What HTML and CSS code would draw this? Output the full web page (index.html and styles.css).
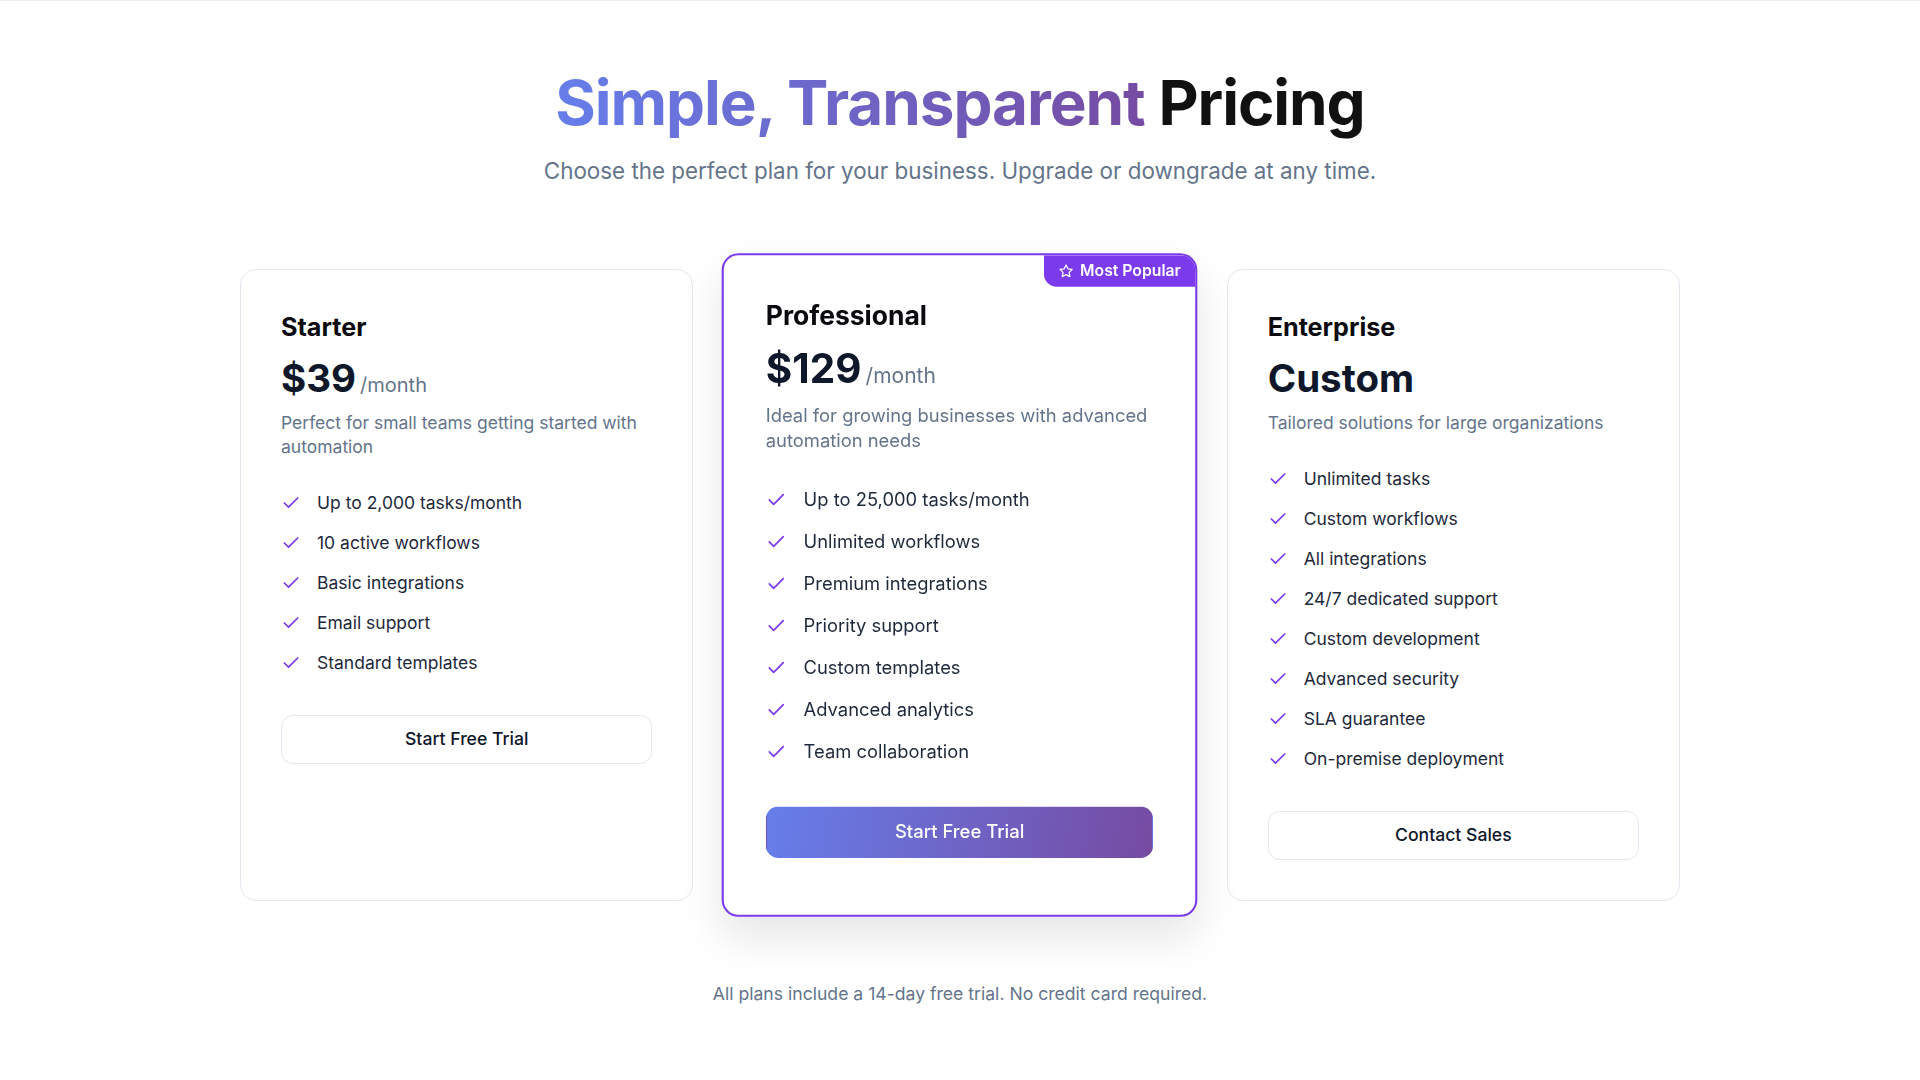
FILE: index.html
```html
<!DOCTYPE html>
<html lang="en">
<head>
<meta charset="utf-8">
<title>Pricing</title>
<link rel="stylesheet" href="styles.css">
</head>
<body>
<main class="page">
  <header class="header">
    <h1 class="title"><span class="grad">Simple, Transparent</span> Pricing</h1>
    <p class="subtitle">Choose the perfect plan for your business. Upgrade or downgrade at any time.</p>
  </header>

  <section class="plans">
    <article class="card">
      <h3 class="plan-name">Starter</h3>
      <div class="price-row"><span class="price">$39</span><span class="period">/month</span></div>
      <p class="desc">Perfect for small teams getting started with automation</p>
      <ul class="features">
        <li><svg class="check" viewBox="0 0 24 24"><path d="M20 6 9 17l-5-5"/></svg><span>Up to 2,000 tasks/month</span></li>
        <li><svg class="check" viewBox="0 0 24 24"><path d="M20 6 9 17l-5-5"/></svg><span>10 active workflows</span></li>
        <li><svg class="check" viewBox="0 0 24 24"><path d="M20 6 9 17l-5-5"/></svg><span>Basic integrations</span></li>
        <li><svg class="check" viewBox="0 0 24 24"><path d="M20 6 9 17l-5-5"/></svg><span>Email support</span></li>
        <li><svg class="check" viewBox="0 0 24 24"><path d="M20 6 9 17l-5-5"/></svg><span>Standard templates</span></li>
      </ul>
      <button class="btn btn-outline">Start Free Trial</button>
    </article>

    <article class="card card-popular">
      <div class="badge"><svg class="star" viewBox="0 0 24 24"><path d="M12 2l3.09 6.26L22 9.27l-5 4.87 1.18 6.88L12 17.77l-6.18 3.25L7 14.14 2 9.27l6.91-1.01L12 2z"/></svg><span>Most Popular</span></div>
      <h3 class="plan-name">Professional</h3>
      <div class="price-row"><span class="price">$129</span><span class="period">/month</span></div>
      <p class="desc">Ideal for growing businesses with advanced automation needs</p>
      <ul class="features">
        <li><svg class="check" viewBox="0 0 24 24"><path d="M20 6 9 17l-5-5"/></svg><span>Up to 25,000 tasks/month</span></li>
        <li><svg class="check" viewBox="0 0 24 24"><path d="M20 6 9 17l-5-5"/></svg><span>Unlimited workflows</span></li>
        <li><svg class="check" viewBox="0 0 24 24"><path d="M20 6 9 17l-5-5"/></svg><span>Premium integrations</span></li>
        <li><svg class="check" viewBox="0 0 24 24"><path d="M20 6 9 17l-5-5"/></svg><span>Priority support</span></li>
        <li><svg class="check" viewBox="0 0 24 24"><path d="M20 6 9 17l-5-5"/></svg><span>Custom templates</span></li>
        <li><svg class="check" viewBox="0 0 24 24"><path d="M20 6 9 17l-5-5"/></svg><span>Advanced analytics</span></li>
        <li><svg class="check" viewBox="0 0 24 24"><path d="M20 6 9 17l-5-5"/></svg><span>Team collaboration</span></li>
      </ul>
      <button class="btn btn-primary">Start Free Trial</button>
    </article>

    <article class="card">
      <h3 class="plan-name">Enterprise</h3>
      <div class="price-row"><span class="price">Custom</span></div>
      <p class="desc">Tailored solutions for large organizations</p>
      <ul class="features">
        <li><svg class="check" viewBox="0 0 24 24"><path d="M20 6 9 17l-5-5"/></svg><span>Unlimited tasks</span></li>
        <li><svg class="check" viewBox="0 0 24 24"><path d="M20 6 9 17l-5-5"/></svg><span>Custom workflows</span></li>
        <li><svg class="check" viewBox="0 0 24 24"><path d="M20 6 9 17l-5-5"/></svg><span>All integrations</span></li>
        <li><svg class="check" viewBox="0 0 24 24"><path d="M20 6 9 17l-5-5"/></svg><span>24/7 dedicated support</span></li>
        <li><svg class="check" viewBox="0 0 24 24"><path d="M20 6 9 17l-5-5"/></svg><span>Custom development</span></li>
        <li><svg class="check" viewBox="0 0 24 24"><path d="M20 6 9 17l-5-5"/></svg><span>Advanced security</span></li>
        <li><svg class="check" viewBox="0 0 24 24"><path d="M20 6 9 17l-5-5"/></svg><span>SLA guarantee</span></li>
        <li><svg class="check" viewBox="0 0 24 24"><path d="M20 6 9 17l-5-5"/></svg><span>On-premise deployment</span></li>
      </ul>
      <button class="btn btn-outline">Contact Sales</button>
    </article>
  </section>

  <p class="footnote">All plans include a 14-day free trial. No credit card required.</p>
</main>
</body>
</html>
```

FILE: styles.css
```css
* { box-sizing: border-box; }

html, body {
  margin: 0;
  padding: 0;
  background: #ffffff;
}

body {
  font-family: Inter, "Noto Sans", "Liberation Sans", sans-serif;
  color: #1e293b;
  border-top: 1px solid #ececec;
}

.page {
  padding: 65px 0 40px;
}

.header {
  text-align: center;
  margin-bottom: 83px;
}

.title {
  margin: 0 0 16px;
  font-size: 62px;
  line-height: 1.2;
  font-weight: 700;
  letter-spacing: -0.017em;
  color: #111111;
}

.grad {
  background: linear-gradient(90deg, #667eea 0%, #764ba2 100%);
  -webkit-background-clip: text;
  background-clip: text;
  color: transparent;
}

.subtitle {
  margin: 0;
  font-size: 22.4px;
  line-height: 30px;
  color: #64748b;
}

.plans {
  width: 1440px;
  margin: 0 auto;
  display: grid;
  grid-template-columns: repeat(3, 1fr);
  gap: 40px;
}

.card {
  position: relative;
  overflow: hidden;
  background: #ffffff;
  border: 1px solid #e2e8f0;
  border-radius: 16px;
  padding: 40px;
}

.card-popular {
  border: 2px solid #7c3aed;
  transform: scale(1.05);
  box-shadow: 0 20px 40px rgba(15, 23, 42, 0.10);
  z-index: 1;
}

.badge {
  position: absolute;
  top: 0;
  right: 0;
  display: flex;
  align-items: center;
  gap: 6px;
  padding: 6px 14px;
  background: #7c3aed;
  color: #ffffff;
  font-size: 15px;
  line-height: 18px;
  font-weight: 600;
  border-bottom-left-radius: 12px;
}

.star {
  width: 14px;
  height: 14px;
  fill: none;
  stroke: #ffffff;
  stroke-width: 2;
  stroke-linejoin: round;
  stroke-linecap: round;
}

.plan-name {
  margin: 0 0 9px;
  padding-top: 1px;
  font-size: 25.2px;
  line-height: 33.6px;
  font-weight: 700;
  color: #0b0b0f;
}

.price-row {
  display: flex;
  align-items: baseline;
  gap: 4px;
  margin-bottom: 9px;
}

.price {
  font-size: 38.5px;
  line-height: 48px;
  font-weight: 700;
  color: #0f172a;
}

.period {
  font-size: 20px;
  line-height: 30px;
  color: #64748b;
}

.desc {
  margin: 0 0 24px;
  font-size: 17.5px;
  line-height: 24px;
  color: #64748b;
}

.features {
  list-style: none;
  margin: 0 0 32px;
  padding: 0;
}

.features li {
  display: flex;
  align-items: center;
  gap: 16px;
  padding: 8px 0;
  font-size: 17.5px;
  line-height: 24px;
  color: #1e293b;
}

.check {
  flex: none;
  width: 20px;
  height: 20px;
  fill: none;
  stroke: #7c3aed;
  stroke-width: 2;
  stroke-linecap: round;
  stroke-linejoin: round;
}

.btn {
  display: block;
  width: 100%;
  padding: 11.5px 24px;
  font-family: inherit;
  font-size: 17.6px;
  line-height: 24px;
  font-weight: 500;
  border-radius: 12px;
  cursor: pointer;
}

.btn-outline {
  background: #ffffff;
  border: 1px solid #e2e8f0;
  color: #0f172a;
}

.btn-primary {
  background: linear-gradient(100deg, #667eea 0%, #764ba2 100%);
  border: 1px solid transparent;
  color: #ffffff;
}

.footnote {
  margin: 81px 0 0;
  text-align: center;
  font-size: 17.6px;
  line-height: 24px;
  color: #64748b;
}
```
